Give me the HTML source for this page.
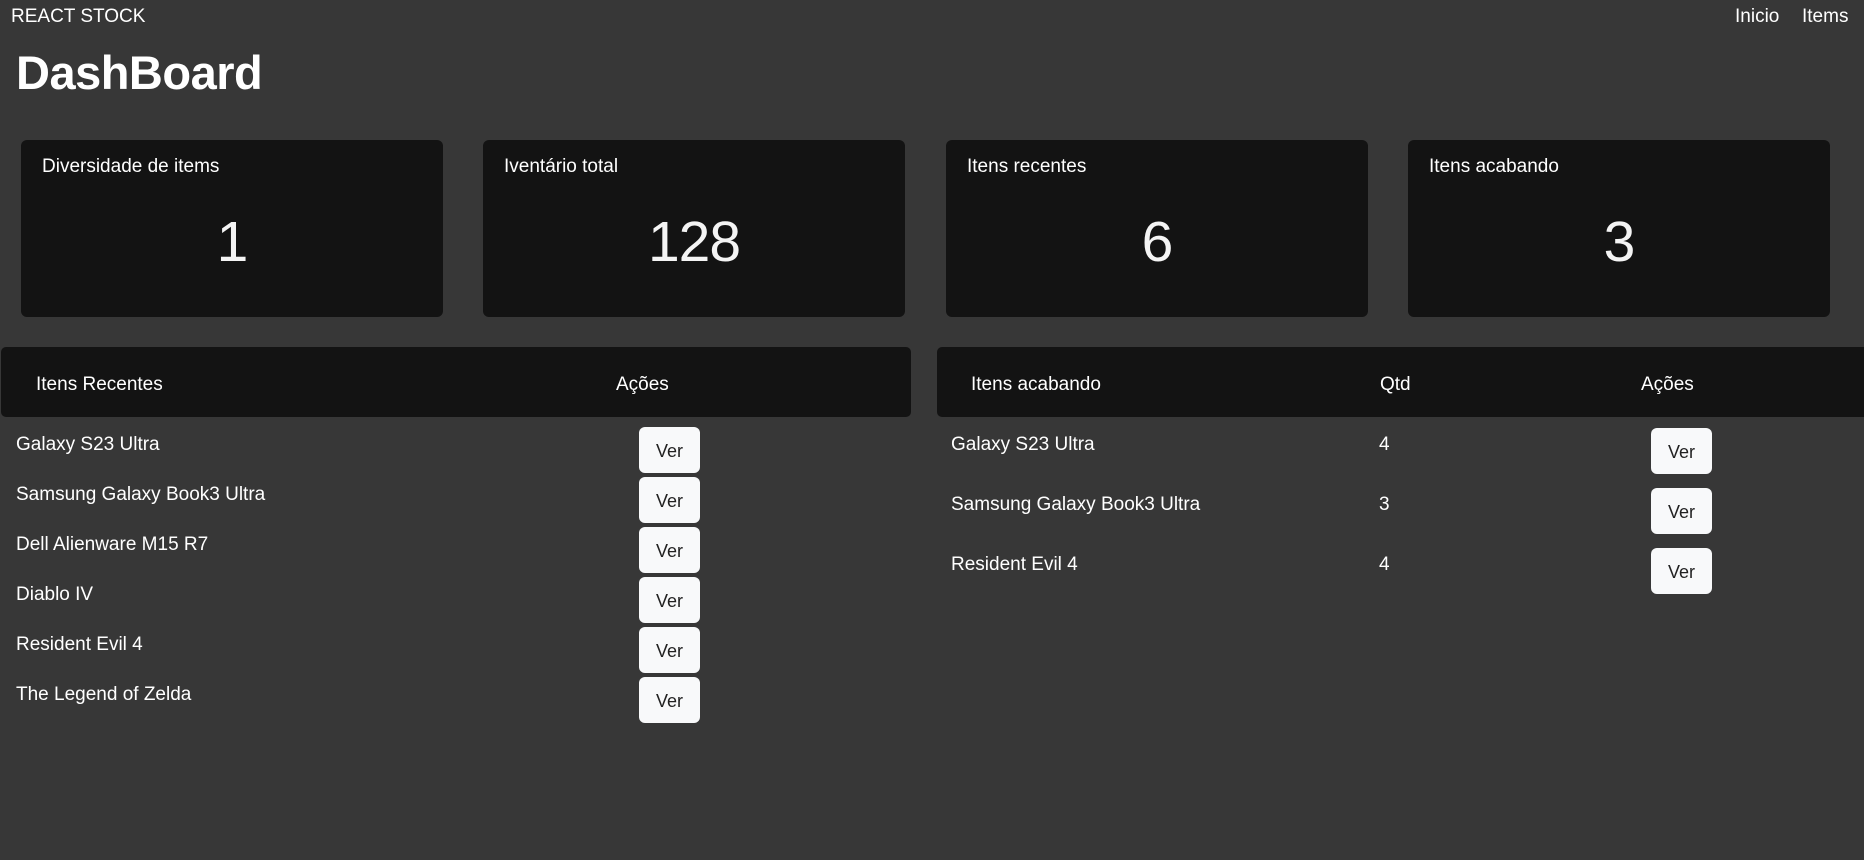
<!DOCTYPE html>
<html><head><meta charset="utf-8"><style>
*{margin:0;padding:0;box-sizing:border-box}
body{width:1864px;height:860px;background:#373737;color:#fff;font-family:"Liberation Sans",sans-serif;position:relative;overflow:hidden}
.a{position:absolute;white-space:nowrap}
.card{position:absolute;top:140px;width:422px;height:177px;background:#131313;border-radius:6px}
.card .l{position:absolute;left:21px;top:16px;font-size:19px}
.card .n{position:absolute;left:0;right:0;top:69px;text-align:center;font-size:57px;font-weight:300;letter-spacing:-1px;color:#f4f4f4}
.hd{position:absolute;top:347px;height:70px;background:#131313;border-radius:5px}
.hd span{position:absolute;top:27px;font-size:19px}
.t{position:absolute;font-size:19px;line-height:22px}
.b{position:absolute;width:61px;height:46px;background:#f8f9fa;color:#222;border-radius:6px;font-size:18px;text-align:center;line-height:48px}
</style></head><body>
<div class="a" style="left:11px;top:6px;font-size:19px">REACT STOCK</div>
<div class="a" style="left:1735px;top:6px;font-size:19px">Inicio</div>
<div class="a" style="left:1802px;top:6px;font-size:19px">Items</div>
<div class="a" style="left:16px;top:45px;font-size:47px;font-weight:bold;letter-spacing:-0.5px">DashBoard</div>

<div class="card" style="left:21px"><div class="l">Diversidade de items</div><div class="n">1</div></div>
<div class="card" style="left:483px"><div class="l">Iventário total</div><div class="n">128</div></div>
<div class="card" style="left:946px"><div class="l">Itens recentes</div><div class="n">6</div></div>
<div class="card" style="left:1408px"><div class="l">Itens acabando</div><div class="n">3</div></div>

<div class="hd" style="left:1px;width:910px"><span style="left:35px">Itens Recentes</span><span style="left:615px">Ações</span></div>
<div class="hd" style="left:937px;width:940px"><span style="left:34px">Itens acabando</span><span style="left:443px">Qtd</span><span style="left:704px">Ações</span></div>

<div class="t" style="left:16px;top:434px">Galaxy S23 Ultra</div>
<div class="t" style="left:16px;top:484px">Samsung Galaxy Book3 Ultra</div>
<div class="t" style="left:16px;top:534px">Dell Alienware M15 R7</div>
<div class="t" style="left:16px;top:584px">Diablo IV</div>
<div class="t" style="left:16px;top:634px">Resident Evil 4</div>
<div class="t" style="left:16px;top:684px">The Legend of Zelda</div>
<div class="b" style="left:639px;top:427px">Ver</div>
<div class="b" style="left:639px;top:477px">Ver</div>
<div class="b" style="left:639px;top:527px">Ver</div>
<div class="b" style="left:639px;top:577px">Ver</div>
<div class="b" style="left:639px;top:627px">Ver</div>
<div class="b" style="left:639px;top:677px">Ver</div>

<div class="t" style="left:951px;top:434px">Galaxy S23 Ultra</div>
<div class="t" style="left:951px;top:494px">Samsung Galaxy Book3 Ultra</div>
<div class="t" style="left:951px;top:554px">Resident Evil 4</div>
<div class="t" style="left:1379px;top:434px">4</div>
<div class="t" style="left:1379px;top:494px">3</div>
<div class="t" style="left:1379px;top:554px">4</div>
<div class="b" style="left:1651px;top:428px">Ver</div>
<div class="b" style="left:1651px;top:488px">Ver</div>
<div class="b" style="left:1651px;top:548px">Ver</div>
</body></html>
